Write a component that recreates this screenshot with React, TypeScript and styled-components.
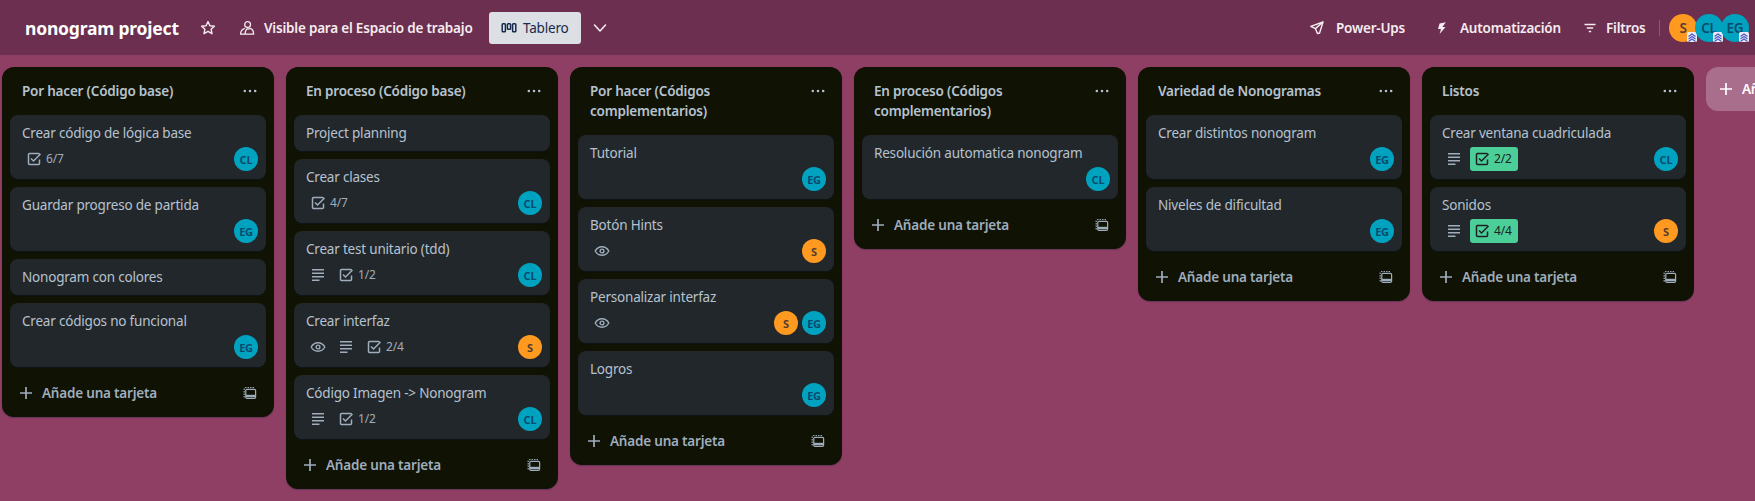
import styled, { createGlobalStyle } from "styled-components";

const GlobalStyle = createGlobalStyle`
  html, body {
    margin: 0;
    padding: 0;
    height: 100%;
    overflow: hidden;
    font-family: "Noto Sans", "Open Sans", sans-serif;
    letter-spacing: -0.2px;
    background: #8f3e64;
  }
  * { box-sizing: border-box; }
  svg { flex: none; }
`;

type Person = "S" | "CL" | "EG";

type CardData = {
  title: string;
  eye?: boolean;
  desc?: boolean;
  check?: string;
  done?: boolean;
  people?: Person[];
};

type ListData = { title: string; cards: CardData[] };

const lists: ListData[] = [
  {
    title: "Por hacer (Código base)",
    cards: [
      { title: "Crear código de lógica base", check: "6/7", people: ["CL"] },
      { title: "Guardar progreso de partida", people: ["EG"] },
      { title: "Nonogram con colores" },
      { title: "Crear códigos no funcional", people: ["EG"] },
    ],
  },
  {
    title: "En proceso (Código base)",
    cards: [
      { title: "Project planning" },
      { title: "Crear clases", check: "4/7", people: ["CL"] },
      { title: "Crear test unitario (tdd)", desc: true, check: "1/2", people: ["CL"] },
      { title: "Crear interfaz", eye: true, desc: true, check: "2/4", people: ["S"] },
      { title: "Código Imagen -> Nonogram", desc: true, check: "1/2", people: ["CL"] },
    ],
  },
  {
    title: "Por hacer (Códigos complementarios)",
    cards: [
      { title: "Tutorial", people: ["EG"] },
      { title: "Botón Hints", eye: true, people: ["S"] },
      { title: "Personalizar interfaz", eye: true, people: ["S", "EG"] },
      { title: "Logros", people: ["EG"] },
    ],
  },
  {
    title: "En proceso (Códigos complementarios)",
    cards: [{ title: "Resolución automatica nonogram", people: ["CL"] }],
  },
  {
    title: "Variedad de Nonogramas",
    cards: [
      { title: "Crear distintos nonogram", people: ["EG"] },
      { title: "Niveles de dificultad", people: ["EG"] },
    ],
  },
  {
    title: "Listos",
    cards: [
      { title: "Crear ventana cuadriculada", desc: true, check: "2/2", done: true, people: ["CL"] },
      { title: "Sonidos", desc: true, check: "4/4", done: true, people: ["S"] },
    ],
  },
];

function StarIcon() {
  return (
    <svg width="16" height="16" viewBox="0 0 16 16" fill="none" stroke="currentColor" strokeWidth="1.4" strokeLinejoin="round">
      <path d="M8 1.6l1.9 4.1 4.5.5-3.3 3 .9 4.5L8 11.4l-4 2.3.9-4.5-3.3-3 4.5-.5z" />
    </svg>
  );
}

function PeopleIcon() {
  return (
    <svg width="16" height="16" viewBox="0 0 16 16" fill="none" stroke="currentColor" strokeWidth="1.3" strokeLinejoin="round">
      <circle cx="8.600" cy="4.600" r="2.900" />
      <path d="M5.800 8.300C3.200 9 1.600 11.200 1.600 14.200h13c0-3-1.400-5.300-3.600-5.800-1.200.8-2.400.8-3.400.3" />
      <path d="M6 14.200c0-2.200.6-4 1.800-5.400" />
    </svg>
  );
}

function BoardIcon() {
  return (
    <svg width="16" height="16" viewBox="0 0 16 16" fill="none" stroke="currentColor" strokeWidth="1.5">
      <rect x="1.200" y="3.800" width="3.200" height="8" rx="0.800" />
      <rect x="6.400" y="3.800" width="3.200" height="5.400" rx="0.800" />
      <rect x="11.600" y="3.800" width="3.200" height="8" rx="0.800" />
    </svg>
  );
}

function ChevronIcon() {
  return (
    <svg width="16" height="16" viewBox="0 0 16 16" fill="none" stroke="currentColor" strokeWidth="1.6" strokeLinecap="round" strokeLinejoin="round">
      <path d="M2.500 5l5.500 6 5.500-6" />
    </svg>
  );
}

function RocketIcon() {
  return (
    <svg width="16" height="16" viewBox="0 0 16 16" fill="none" stroke="currentColor" strokeWidth="1.4" strokeLinejoin="round">
      <path d="M14 2L1.800 6.400l4.600 2.200 2 5L10.600 13z" />
      <path d="M6.400 8.600L14 2" />
    </svg>
  );
}

function BoltIcon() {
  return (
    <svg width="16" height="16" viewBox="0 0 16 16" fill="currentColor">
      <path d="M11.800 2.200L5.600 3.400 4 9h3L5.600 14l5.900-7H8.400z" />
    </svg>
  );
}

function FilterIcon() {
  return (
    <svg width="16" height="16" viewBox="0 0 16 16" fill="none" stroke="currentColor" strokeWidth="1.4">
      <path d="M2.500 4.500h11M4.800 8h6.400M6.800 11.500h2.400" />
    </svg>
  );
}

function DotsIcon() {
  return (
    <svg width="16" height="16" viewBox="0 0 16 16" fill="currentColor">
      <circle cx="2.800" cy="8" r="1.250" />
      <circle cx="8" cy="8" r="1.250" />
      <circle cx="13.200" cy="8" r="1.250" />
    </svg>
  );
}

function EyeIcon() {
  return (
    <svg width="16" height="16" viewBox="0 0 16 16" fill="none" stroke="currentColor" strokeWidth="1.400">
      <path d="M1.200 8c1.500-2.700 3.900-4.200 6.800-4.200s5.300 1.500 6.800 4.200c-1.500 2.700-3.900 4.200-6.800 4.200S2.700 10.700 1.200 8z" />
      <circle cx="8" cy="8" r="1.900" />
    </svg>
  );
}

function LinesIcon() {
  return (
    <svg width="16" height="16" viewBox="0 0 16 16" fill="none" stroke="currentColor" strokeWidth="1.500">
      <path d="M2 2.800h12M2 6.300h12M2 9.800h12M2 13.300h7.500" />
    </svg>
  );
}

function CheckIcon() {
  return (
    <svg width="16" height="16" viewBox="0 0 16 16" fill="none" stroke="currentColor" strokeWidth="1.500">
      <path d="M13.500 8.500v4a1 1 0 0 1-1 1h-9a1 1 0 0 1-1-1v-9a1 1 0 0 1 1-1h9a1 1 0 0 1 1 1" />
      <path d="M5 7.500l2.500 2.500 7-7" />
    </svg>
  );
}

function PlusIcon() {
  return (
    <svg width="16" height="16" viewBox="0 0 16 16" fill="none" stroke="currentColor" strokeWidth="1.700">
      <path d="M8 2v12M2 8h12" />
    </svg>
  );
}

function TemplateIcon() {
  return (
    <svg width="16" height="16" viewBox="0 0 16 16" fill="none" stroke="currentColor" strokeWidth="1.200">
      <path d="M2.200 12.500v-8.500a1.500 1.500 0 0 1 1.500-1.500h8.800" strokeDasharray="1.400 1.100" />
      <rect x="3.800" y="4.400" width="9.800" height="9" rx="1.200" />
      <path d="M3.800 11h9.800" strokeWidth="2.400" />
    </svg>
  );
}

function AdminMark() {
  return (
    <MarkBox viewBox="0 0 10 10">
      <rect width="10" height="10" rx="1.500" fill="#e9ebf5" />
      <path d="M1.500 4.500L5 2l3.500 2.500M1.500 7L5 4.500 8.500 7M1.500 9.500L5 7l3.500 2.500" fill="none" stroke="#4a55c0" strokeWidth="1.100" />
    </MarkBox>
  );
}

function Card({ card }: { card: CardData }) {
  const hasRow = card.eye || card.desc || card.check || card.people;
  return (
    <CardBox>
      <CardTitle $compact={!hasRow}>{card.title}</CardTitle>
      {hasRow && (
        <BadgeRow>
          {card.eye && (
            <Badge>
              <EyeIcon />
            </Badge>
          )}
          {card.desc && (
            <Badge>
              <LinesIcon />
            </Badge>
          )}
          {card.check && (
            <Badge $done={card.done}>
              <CheckIcon />
              <BadgeText>{card.check}</BadgeText>
            </Badge>
          )}
          <CardPeople>
            {card.people?.map((p) => (
              <Avatar key={p} $person={p}>
                {p}
              </Avatar>
            ))}
          </CardPeople>
        </BadgeRow>
      )}
    </CardBox>
  );
}

function List({ list }: { list: ListData }) {
  return (
    <ListBox>
      <ListHeader>
        <ListTitle>{list.title}</ListTitle>
        <ListMenu>
          <DotsIcon />
        </ListMenu>
      </ListHeader>
      <CardStack>
        {list.cards.map((c) => (
          <Card key={c.title} card={c} />
        ))}
      </CardStack>
      <ListFooter>
        <AddCard>
          <PlusIcon />
          Añade una tarjeta
        </AddCard>
        <TemplateButton>
          <TemplateIcon />
        </TemplateButton>
      </ListFooter>
    </ListBox>
  );
}

export default function App() {
  return (
    <Page>
      <GlobalStyle />
      <TopBar>
        <BoardName>nonogram project</BoardName>
        <StarButton>
          <StarIcon />
        </StarButton>
        <Visibility>
          <PeopleIcon />
          Visible para el Espacio de trabajo
        </Visibility>
        <ViewTab>
          <BoardIcon />
          Tablero
        </ViewTab>
        <ViewChevron>
          <ChevronIcon />
        </ViewChevron>
        <Actions>
          <Action $width={95} $gap={11} $after={30}>
            <RocketIcon />
            Power-Ups
          </Action>
          <Action $width={125} $gap={10} $after={23}>
            <BoltIcon />
            Automatización
          </Action>
          <Action $width={63} $gap={8} $after={14}>
            <FilterIcon />
            Filtros
          </Action>
          <Divider />
          <Members>
            {(["S", "CL", "EG"] as Person[]).map((p) => (
              <Member key={p} $person={p}>
                {p}
                <AdminMark />
              </Member>
            ))}
          </Members>
        </Actions>
      </TopBar>
      <Board>
        {lists.map((l) => (
          <List key={l.title} list={l} />
        ))}
        <AddList>
          <PlusIcon />
          <AddListText>Añade otra lista</AddListText>
        </AddList>
      </Board>
    </Page>
  );
}

const Page = styled.div`
  width: 1755px;
  height: 501px;
  overflow: hidden;
  background: #8f3e64;
`;

const TopBar = styled.header`
  height: 55px;
  display: flex;
  align-items: center;
  padding: 0 6px 0 25px;
  background: #6c2f4f;
  color: #f4ecf0;
`;

const BoardName = styled.h1`
  margin: 0;
  width: 153px;
  font-size: 17.5px;
  font-weight: 700;
  line-height: 32px;
  color: #ffffff;
  white-space: nowrap;
`;

const StarButton = styled.span`
  display: flex;
  margin-left: 22px;
`;

const Visibility = styled.span`
  display: flex;
  align-items: center;
  gap: 9px;
  margin-left: 23px;
  width: 234px;
  font-size: 13.5px;
  font-weight: 600;
  white-space: nowrap;
`;

const ViewTab = styled.span`
  display: flex;
  align-items: center;
  gap: 6px;
  width: 92px;
  height: 32px;
  margin-left: 16px;
  padding-left: 12px;
  border-radius: 3px;
  background: #dcdfe4;
  color: #172b4d;
  font-size: 13.5px;
`;

const ViewChevron = styled.span`
  display: flex;
  margin-left: 11px;
`;

const Actions = styled.div`
  display: flex;
  align-items: center;
  margin-left: auto;
`;

const Action = styled.span<{ $width: number; $gap: number; $after: number }>`
  display: flex;
  align-items: center;
  gap: ${(p) => p.$gap}px;
  width: ${(p) => p.$width}px;
  margin-right: ${(p) => p.$after}px;
  font-size: 13.5px;
  font-weight: 600;
  white-space: nowrap;
`;

const Divider = styled.span`
  width: 1px;
  height: 16px;
  margin-right: 9px;
  background: rgba(255, 255, 255, 0.2);
`;

const Members = styled.div`
  display: flex;
`;

const avatarColor = (p: Person) => (p === "S" ? "#ff991f" : "#00a3bf");

const Member = styled.span<{ $person: Person }>`
  position: relative;
  display: flex;
  align-items: center;
  justify-content: center;
  width: 28px;
  height: 28px;
  margin-right: -2px;
  border-radius: 50%;
  background: ${(p) => avatarColor(p.$person)};
  color: ${(p) => (p.$person === "S" ? "#533f2c" : "#0b4a6f")};
  font-size: 13.5px;
  font-weight: 600;
  &:last-child { margin-right: 0; }
`;

const MarkBox = styled.svg`
  position: absolute;
  right: 0;
  bottom: 0;
  width: 10px;
  height: 10px;
`;

const Board = styled.main`
  display: flex;
  align-items: flex-start;
  gap: 12px;
  padding: 12px 0 0 2px;
`;

const ListBox = styled.section`
  flex: none;
  width: 272px;
  border-radius: 12px;
  background: #101204;
  box-shadow: 0 1px 1px rgba(9, 30, 66, 0.3);
`;

const ListHeader = styled.div`
  display: flex;
  align-items: flex-start;
  justify-content: space-between;
  padding: 14px 8px 14px 20px;
`;

const ListTitle = styled.h2`
  margin: 0;
  width: 204px;
  font-size: 13.5px;
  font-weight: 600;
  line-height: 20px;
  color: #b6c2cf;
`;

const ListMenu = styled.span`
  display: flex;
  justify-content: center;
  width: 32px;
  height: 20px;
  padding-top: 2px;
  color: #b6c2cf;
`;

const CardStack = styled.div`
  display: flex;
  flex-direction: column;
  gap: 8px;
  padding: 0 8px;
`;

const CardBox = styled.article`
  border-radius: 8px;
  padding: 8px 8px 8px 12px;
  background: #22272b;
  box-shadow: 0 1px 1px rgba(9, 30, 66, 0.3);
`;

const CardTitle = styled.div<{ $compact?: boolean }>`
  font-size: 13.5px;
  line-height: 20px;
  color: #b6c2cf;
  margin-bottom: ${(p) => (p.$compact ? 0 : 4)}px;
  white-space: nowrap;
`;

const BadgeRow = styled.div`
  display: flex;
  align-items: center;
  gap: 4px;
  height: 24px;
`;

const Badge = styled.span<{ $done?: boolean }>`
  display: flex;
  align-items: center;
  gap: 4px;
  height: 24px;
  padding: 0 ${(p) => (p.$done ? 6 : 4)}px 0 4px;
  border-radius: 3px;
  background: ${(p) => (p.$done ? "#4bce97" : "transparent")};
  color: ${(p) => (p.$done ? "#1d2125" : "#9fadbc")};
`;

const BadgeText = styled.span`
  font-size: 12px;
  line-height: 16px;
`;

const CardPeople = styled.div`
  display: flex;
  gap: 4px;
  margin-left: auto;
`;

const Avatar = styled.span<{ $person: Person }>`
  display: flex;
  align-items: center;
  justify-content: center;
  width: 24px;
  height: 24px;
  border-radius: 50%;
  background: ${(p) => avatarColor(p.$person)};
  color: ${(p) => (p.$person === "S" ? "#533f2c" : "#0b4a6f")};
  font-size: 11px;
  font-weight: 700;
`;

const ListFooter = styled.div`
  display: flex;
  align-items: center;
  padding: 10px 8px 8px;
`;

const AddCard = styled.span`
  flex: 1;
  display: flex;
  align-items: center;
  gap: 8px;
  height: 32px;
  padding-left: 8px;
  font-size: 13.5px;
  font-weight: 600;
  color: #9fadbc;
`;

const TemplateButton = styled.span`
  display: flex;
  align-items: center;
  justify-content: center;
  width: 32px;
  height: 32px;
  color: #9fadbc;
`;

const AddList = styled.div`
  flex: none;
  display: flex;
  align-items: center;
  gap: 8px;
  width: 272px;
  height: 44px;
  padding-left: 12px;
  border-radius: 12px;
  background: #a96e8b;
  color: #ffffff;
`;

const AddListText = styled.span`
  font-size: 13.5px;
  font-weight: 600;
`;
